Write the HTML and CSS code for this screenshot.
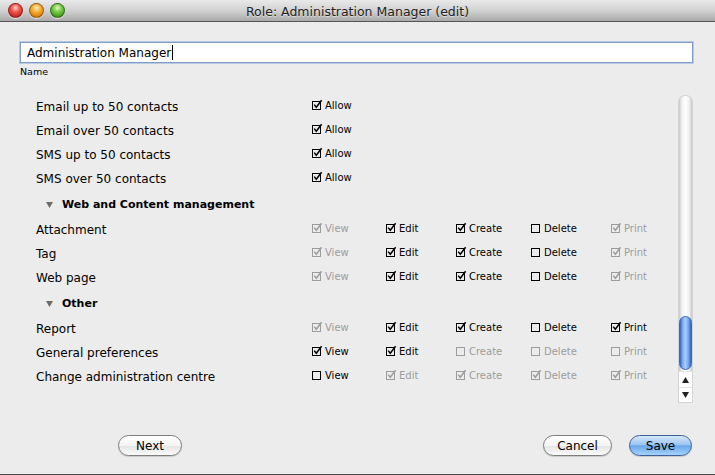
FILE: index.html
```html
<!DOCTYPE html>
<html>
<head>
<meta charset="utf-8">
<link rel="stylesheet" href="styles.css">
</head>
<body>
<svg width="0" height="0" class="defs">
  <symbol id="cb-on" viewBox="0 0 11 11">
    <rect x="0.5" y="2.5" width="8" height="8" fill="none" stroke="currentColor"/>
    <path d="M2.2 5.6 L4.3 8.3 L9.6 1.2" fill="none" stroke="currentColor" stroke-width="1.5"/>
  </symbol>
  <symbol id="cb-off" viewBox="0 0 11 11">
    <rect x="0.5" y="2.5" width="8" height="8" fill="none" stroke="currentColor"/>
  </symbol>
</svg>
<div class="window">
  <header class="titlebar">
    <div class="lights">
      <span class="light red"></span>
      <span class="light yellow"></span>
      <span class="light green"></span>
    </div>
    <div class="title">Role: Administration Manager (edit)</div>
    <div></div>
  </header>

  <main class="content">
    <div class="name-field">
      <div class="input"><span>Administration Manager</span><span class="caret"></span></div>
      <div class="name-label">Name</div>
    </div>

    <div class="scroll">
      <div class="list">
        <div class="row">
          <span class="label">Email up to 50 contacts</span>
          <span class="cb"><svg><use href="#cb-on"/></svg>Allow</span>
        </div>
        <div class="row">
          <span class="label">Email over 50 contacts</span>
          <span class="cb"><svg><use href="#cb-on"/></svg>Allow</span>
        </div>
        <div class="row">
          <span class="label">SMS up to 50 contacts</span>
          <span class="cb"><svg><use href="#cb-on"/></svg>Allow</span>
        </div>
        <div class="row">
          <span class="label">SMS over 50 contacts</span>
          <span class="cb"><svg><use href="#cb-on"/></svg>Allow</span>
        </div>

        <div class="group">
          <svg class="tri" viewBox="0 0 7 6"><path d="M0 0 H7 L3.5 6 Z"/></svg>
          <span>Web and Content management</span>
        </div>

        <div class="row">
          <span class="label">Attachment</span>
          <span class="cb dis"><svg><use href="#cb-on"/></svg>View</span>
          <span class="cb"><svg><use href="#cb-on"/></svg>Edit</span>
          <span class="cb"><svg><use href="#cb-on"/></svg>Create</span>
          <span class="cb"><svg><use href="#cb-off"/></svg>Delete</span>
          <span class="cb dis"><svg><use href="#cb-on"/></svg>Print</span>
        </div>
        <div class="row">
          <span class="label">Tag</span>
          <span class="cb dis"><svg><use href="#cb-on"/></svg>View</span>
          <span class="cb"><svg><use href="#cb-on"/></svg>Edit</span>
          <span class="cb"><svg><use href="#cb-on"/></svg>Create</span>
          <span class="cb"><svg><use href="#cb-off"/></svg>Delete</span>
          <span class="cb dis"><svg><use href="#cb-on"/></svg>Print</span>
        </div>
        <div class="row">
          <span class="label">Web page</span>
          <span class="cb dis"><svg><use href="#cb-on"/></svg>View</span>
          <span class="cb"><svg><use href="#cb-on"/></svg>Edit</span>
          <span class="cb"><svg><use href="#cb-on"/></svg>Create</span>
          <span class="cb"><svg><use href="#cb-off"/></svg>Delete</span>
          <span class="cb dis"><svg><use href="#cb-on"/></svg>Print</span>
        </div>

        <div class="group">
          <svg class="tri" viewBox="0 0 7 6"><path d="M0 0 H7 L3.5 6 Z"/></svg>
          <span>Other</span>
        </div>

        <div class="row">
          <span class="label">Report</span>
          <span class="cb dis"><svg><use href="#cb-on"/></svg>View</span>
          <span class="cb"><svg><use href="#cb-on"/></svg>Edit</span>
          <span class="cb"><svg><use href="#cb-on"/></svg>Create</span>
          <span class="cb"><svg><use href="#cb-off"/></svg>Delete</span>
          <span class="cb"><svg><use href="#cb-on"/></svg>Print</span>
        </div>
        <div class="row">
          <span class="label">General preferences</span>
          <span class="cb"><svg><use href="#cb-on"/></svg>View</span>
          <span class="cb"><svg><use href="#cb-on"/></svg>Edit</span>
          <span class="cb dis"><svg><use href="#cb-off"/></svg>Create</span>
          <span class="cb dis"><svg><use href="#cb-off"/></svg>Delete</span>
          <span class="cb dis"><svg><use href="#cb-off"/></svg>Print</span>
        </div>
        <div class="row">
          <span class="label">Change administration centre</span>
          <span class="cb"><svg><use href="#cb-off"/></svg>View</span>
          <span class="cb dis"><svg><use href="#cb-on"/></svg>Edit</span>
          <span class="cb dis"><svg><use href="#cb-on"/></svg>Create</span>
          <span class="cb dis"><svg><use href="#cb-on"/></svg>Delete</span>
          <span class="cb dis"><svg><use href="#cb-on"/></svg>Print</span>
        </div>
      </div>

      <div class="scrollbar">
        <div class="track">
          <div class="thumb"></div>
        </div>
        <div class="arrow up"><svg viewBox="0 0 7 6"><path d="M3.5 0 L7 6 H0 Z"/></svg></div>
        <div class="arrow down"><svg viewBox="0 0 7 6"><path d="M0 0 H7 L3.5 6 Z"/></svg></div>
      </div>
    </div>
  </main>

  <footer class="buttons">
    <button class="btn">Next</button>
    <div class="spacer"></div>
    <button class="btn cancel">Cancel</button>
    <button class="btn primary">Save</button>
  </footer>
</div>
</body>
</html>
```

FILE: styles.css
```css
* { box-sizing: border-box; }

html, body {
  margin: 0;
  padding: 0;
  background: #ececec;
}

.defs { position: absolute; width: 0; height: 0; }

.window {
  width: 715px;
  height: 475px;
  display: flex;
  flex-direction: column;
  background: #ececec;
  border-bottom: 1px solid #4a4a4a;
  font-family: "DejaVu Sans", "Liberation Sans", sans-serif;
  color: #000;
}

/* ---------- title bar ---------- */
.titlebar {
  height: 22px;
  flex: none;
  display: grid;
  grid-template-columns: 1fr auto 1fr;
  align-items: center;
  background: linear-gradient(#e9e9e9, #d2d2d2 50%, #a9a9a9);
  border-bottom: 1px solid #555;
}

.lights {
  display: flex;
  gap: 6px;
  padding-left: 8px;
  align-items: center;
}

.light {
  width: 15px;
  height: 15px;
  border-radius: 50%;
  border: 1px solid rgba(0, 0, 0, 0.35);
  box-shadow: 0 1px 1px rgba(255, 255, 255, 0.6);
}
.light.red {
  background: radial-gradient(circle at 50% 30%, #ffd0cc 0, #f25a52 35%, #c4261f 80%, #d0342c 100%);
}
.light.yellow {
  background: radial-gradient(circle at 50% 30%, #fff0c4 0, #f8b23a 35%, #d97b0a 80%, #e48c16 100%);
}
.light.green {
  background: radial-gradient(circle at 50% 30%, #e0f8c8 0, #7ccf47 35%, #3e941a 80%, #4ea526 100%);
}

.title {
  font-size: 12.5px;
  color: #222;
  text-shadow: 0 1px 0 rgba(255, 255, 255, 0.5);
  padding-top: 1px;
}

/* ---------- content ---------- */
.content {
  flex: 1;
  display: flex;
  flex-direction: column;
  padding: 20px 22px 0 20px;
}

.name-field {
  display: flex;
  flex-direction: column;
}

.input {
  height: 21px;
  background: #fff;
  border: 1px solid #7e9ec8;
  box-shadow: 0 0 0 1px #b7cbe6;
  display: flex;
  align-items: center;
  padding-left: 6px;
  font-size: 12px;
}

.caret {
  width: 1px;
  height: 15px;
  background: #000;
  margin-left: 1px;
}

.name-label {
  font-size: 9.5px;
  margin-top: 3px;
  line-height: 12px;
}

.scroll {
  margin-top: 17px;
  height: 308px;
  display: flex;
}

.list {
  flex: 1;
  padding-left: 16px;
  display: flex;
  flex-direction: column;
}

.row {
  height: 24px;
  display: grid;
  grid-template-columns: 276px 74px 70px 75px 80px 1fr;
  align-items: center;
  font-size: 12px;
}

.cb {
  display: flex;
  align-items: center;
  gap: 2px;
  font-size: 10px;
  margin-bottom: 4px;
  color: #000;
}
.cb svg {
  width: 11px;
  height: 11px;
  margin-top: -2px;
}
.cb.dis { color: #9c9c9c; }

.group {
  height: 27px;
  display: flex;
  align-items: center;
  padding-left: 10px;
  gap: 9px;
  font-size: 11px;
  font-weight: bold;
}
.tri {
  width: 7px;
  height: 6px;
  fill: #6b6b6b;
}

/* ---------- scrollbar ---------- */
.scrollbar {
  width: 15px;
  display: flex;
  flex-direction: column;
}
.track {
  flex: 1;
  position: relative;
  background: linear-gradient(90deg, #c8c8c8, #eeeeee 20%, #ffffff 50%, #eeeeee 80%, #c8c8c8);
  border-radius: 7px 7px 0 0;
  border: 1px solid #d4d4d4;
  border-bottom: none;
}
.thumb {
  position: absolute;
  left: 0;
  right: 0;
  bottom: 1px;
  height: 54px;
  border-radius: 7px;
  border: 1px solid #3a68b8;
  background: linear-gradient(90deg, #2d63c7, #7fb0ee 25%, #a9ccf5 50%, #76a8ea 75%, #2d63c7);
}
.arrow {
  height: 16px;
  background: #fff;
  border-left: 1px solid #d4d4d4;
  border-right: 1px solid #d4d4d4;
  border-top: 1px solid #e2e2e2;
  display: flex;
  align-items: center;
  justify-content: center;
}
.arrow svg {
  width: 7px;
  height: 6px;
  fill: #222;
}
.arrow.down { border-bottom: 1px solid #d4d4d4; }

/* ---------- buttons ---------- */
.buttons {
  flex: none;
  display: flex;
  align-items: center;
  padding: 0 23px 12px 118px;
  height: 45px;
}
.spacer { flex: 1; }

.btn {
  height: 21px;
  border-radius: 11px;
  border: 1px solid #7d7d7d;
  background: linear-gradient(#ffffff, #f4f4f4 50%, #e4e4e4 51%, #fbfbfb);
  font-family: "DejaVu Sans", "Liberation Sans", sans-serif;
  font-size: 12px;
  color: #000;
  padding: 0;
  width: 64px;
  box-shadow: 0 1px 1px rgba(0, 0, 0, 0.15);
}
.btn.cancel { width: 69px; margin-right: 17px; }
.btn.primary {
  width: 63px;
  border-color: #3d5f99;
  background: linear-gradient(#d6e8fb, #9cc6f3 45%, #6aa8ea 52%, #a5d2fb);
}
```
